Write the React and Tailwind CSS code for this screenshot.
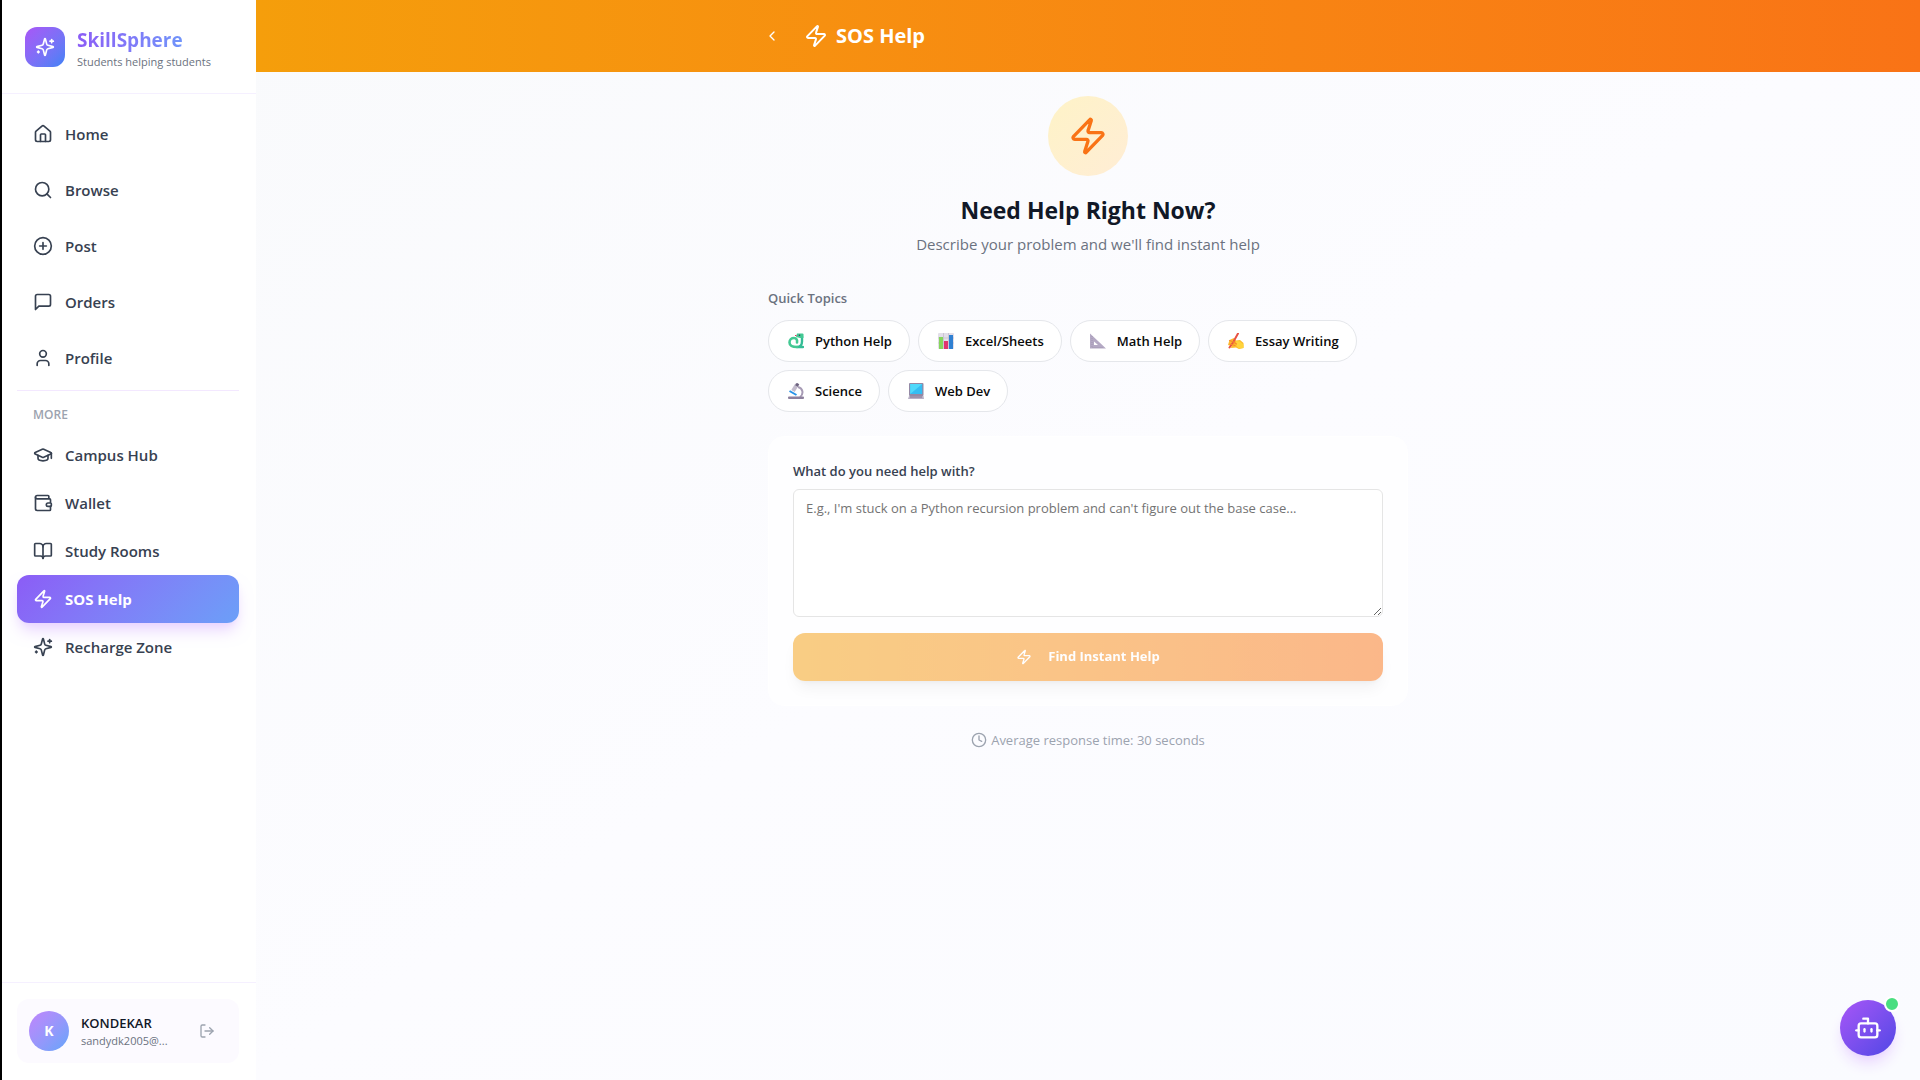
import React from "react";
import {
  House, Search, CirclePlus, User, GraduationCap, Wallet, BookOpen, Zap,
  LogOut, ChevronLeft, Clock, Bot,
} from "lucide-react";

function LineIcon({ className, children }) {
  return (
    <svg className={className} viewBox="0 0 24 24" fill="none" stroke="currentColor" strokeWidth="2" strokeLinecap="round" strokeLinejoin="round" aria-hidden="true">
      {children}
    </svg>
  );
}

function MessageIcon({ className }) {
  return (
    <LineIcon className={className}>
      <path d="M21 15a2 2 0 0 1-2 2H7l-4 4V5a2 2 0 0 1 2-2h14a2 2 0 0 1 2 2z" />
    </LineIcon>
  );
}

function SparklesIcon({ className }) {
  return (
    <LineIcon className={className}>
      <path d="M9.937 15.5A2 2 0 0 0 8.5 14.063l-6.135-1.582a.5.5 0 0 1 0-.962L8.5 9.936A2 2 0 0 0 9.937 8.5l1.582-6.135a.5.5 0 0 1 .963 0L14.063 8.500A2 2 0 0 0 15.500 9.937l6.135 1.581a.5.5 0 0 1 0 .964L15.500 14.063a2 2 0 0 0-1.437 1.437l-1.582 6.135a.5.5 0 0 1-.963 0z" />
      <path d="M20 3v4" />
      <path d="M22 5h-4" />
      <path d="M4 17v2" />
      <path d="M5 18H3" />
    </LineIcon>
  );
}

const mainNav = [
  { label: "Home", Icon: House },
  { label: "Browse", Icon: Search },
  { label: "Post", Icon: CirclePlus },
  { label: "Orders", Icon: MessageIcon },
  { label: "Profile", Icon: User },
];

const moreNav = [
  { label: "Campus Hub", Icon: GraduationCap },
  { label: "Wallet", Icon: Wallet },
  { label: "Study Rooms", Icon: BookOpen },
  { label: "SOS Help", Icon: Zap, active: true },
  { label: "Recharge Zone", Icon: SparklesIcon },
];

function NavLink({ label, Icon, active }) {
  return (
    <a
      href="#"
      aria-current={active ? "page" : undefined}
      className={
        active
          ? "flex h-12 items-center gap-3 rounded-xl bg-linear-135 from-[#8b5cf6] to-[#6b9ff8] px-4 text-[15px] font-bold text-white shadow-lg shadow-purple-200"
          : "flex h-12 items-center gap-3 rounded-xl px-4 text-[15px] font-semibold text-[#374151]"
      }
    >
      <Icon className="size-5" />
      <span>{label}</span>
    </a>
  );
}

function Snake() {
  return (
    <svg viewBox="0 0 16 16" className="size-4" aria-hidden="true">
      <path d="M14 3v5.500c0 3.500-2 5.500-5 5.500h6" fill="none" stroke="#35bd96" strokeWidth="2.400" strokeLinecap="round" strokeLinejoin="round" />
      <path d="M9 14C4 14 1.500 12.500 1.500 9.500S3.500 5 6 5s3.500 2 3 4.500" fill="none" stroke="#43c993" strokeWidth="2.600" strokeLinecap="round" />
      <path d="M9 0.500h5.500q1 0 1 1V5H12L8 4z" fill="#43c993" />
      <circle cx="11.500" cy="2.200" r="0.800" fill="#433b6b" />
      <path d="M8.500 2.500H7" stroke="#e0335f" />
    </svg>
  );
}

function Bars() {
  return (
    <svg viewBox="0 0 16 16" className="size-4" aria-hidden="true">
      <rect width="16" height="16" rx="1" fill="#e3dfe9" />
      <path d="M5.500 0v16M10.500 0v16M0 5h16M0 10h16" stroke="#c2bccb" strokeWidth="0.700" />
      <rect x="1" y="4" width="4" height="12" fill="#86d55c" />
      <rect x="6" y="8" width="4" height="8" fill="#e0336e" />
      <rect x="11" y="2" width="4" height="14" fill="#2f80d2" />
    </svg>
  );
}

function Ruler() {
  return (
    <svg viewBox="0 0 16 16" className="size-4" aria-hidden="true">
      <path d="M0 0.500L16 15.500H0zM4 8.500V12h4z" fill="#b4a9c4" fillRule="evenodd" />
      <path d="M2 3v11.500h11" fill="none" stroke="#9e93af" strokeWidth="0.800" strokeDasharray="1 1" />
    </svg>
  );
}

function Writing() {
  return (
    <svg viewBox="0 0 16 16" className="size-4" aria-hidden="true">
      <path d="M1.500 7L6 5l2 2.500 4-.5 3.500 3v5L11 16l-3-1.500-5 .5.500-2L0 12z" fill="#fdbb2b" />
      <path d="M8 8l4 .500 3.500 3V15L11 15.500 8.500 13z" fill="#ffd43b" />
      <path d="M10 0.500L5 9.500 1.500 14.500" fill="none" stroke="#e85244" strokeWidth="2" strokeLinecap="round" />
      <path d="M1.500 7.500l4 1.500 3 2M2 11l5 1.500" fill="none" stroke="#f58a2d" strokeWidth="1.200" strokeLinecap="round" />
    </svg>
  );
}

function Microscope() {
  return (
    <svg viewBox="0 0 16 16" className="size-4" aria-hidden="true">
      <path d="M10 4c5 1 6 7 2 10" fill="none" stroke="#a79bb5" strokeWidth="2" />
      <path d="M9 1.500L5 8" stroke="#c3bccd" strokeWidth="4" />
      <path d="M10 0.500L8.500 3" stroke="#6e6480" strokeWidth="3" />
      <path d="M1.500 8l7 4" stroke="#2793e8" strokeWidth="2" />
      <rect x="0" y="13.500" width="16" height="2.500" rx="1" fill="#8d809d" />
    </svg>
  );
}

function Laptop() {
  return (
    <svg viewBox="0 0 16 16" className="size-4" aria-hidden="true">
      <rect x="1" width="14.500" height="13" rx="1" fill="#9489a5" />
      <rect x="2.200" y="1" width="12" height="10" fill="#35bdf2" />
      <path d="M2.200 11V1h12z" fill="#4fd9fb" />
      <path d="M1 13h14.500l.5 3H0z" fill="#b9b0c6" />
      <path d="M2 14h12" stroke="#81758f" />
    </svg>
  );
}

const topics = [
  { label: "Python Help", Icon: Snake },
  { label: "Excel/Sheets", Icon: Bars },
  { label: "Math Help", Icon: Ruler },
  { label: "Essay Writing", Icon: Writing },
  { label: "Science", Icon: Microscope },
  { label: "Web Dev", Icon: Laptop },
];

function Sidebar() {
  return (
    <aside className="flex w-64 shrink-0 flex-col border-l-2 border-black bg-white">
      <div className="flex h-[94px] items-center gap-3 border-b border-[#f5f0ff] px-[23px]">
        <div className="flex size-10 items-center justify-center rounded-xl bg-linear-to-br from-[#a855f7] to-[#3b82f6] text-white">
          <SparklesIcon className="size-5" />
        </div>
        <div className="pt-0.5">
          <h1 className="w-fit bg-linear-to-r from-[#8b5cf6] to-[#6f94fa] bg-clip-text text-[19px] leading-7 font-bold text-transparent">SkillSphere</h1>
          <p className="text-[11px] leading-4 text-[#6b7280]">Students helping students</p>
        </div>
      </div>
      <nav className="flex-1 pt-4 pr-[17px] pl-[15px]">
        <div className="flex flex-col gap-2 border-b border-[#f3e8ff] pb-2">
          {mainNav.map((item) => <NavLink key={item.label} {...item} />)}
        </div>
        <p className="px-4 pt-4 pb-2 text-[12px] leading-4 font-semibold text-[#9ca3af]">MORE</p>
        {moreNav.map((item) => <NavLink key={item.label} {...item} />)}
      </nav>
      <div className="border-t border-[#f5f0ff] pt-4 pr-[17px] pb-[17px] pl-[15px]">
        <div className="flex items-center gap-3 rounded-xl bg-[#fcfaff] p-3">
          <div className="flex size-10 shrink-0 items-center justify-center rounded-full bg-linear-to-br from-[#c084fc] to-[#60a5fa] text-sm font-bold text-white">K</div>
          <div className="min-w-0 flex-1">
            <p className="text-[13px] leading-5 font-semibold text-[#111827]">KONDEKAR</p>
            <p className="truncate text-[11px] leading-4 text-[#6b7280]">sandydk2005@...</p>
          </div>
          <button type="button" aria-label="Log out" className="flex size-10 shrink-0 items-center justify-center text-[#9ca3af]">
            <LogOut className="size-4" />
          </button>
        </div>
      </div>
    </aside>
  );
}

export default function App() {
  return (
    <div className="flex min-h-screen bg-white font-['Open_Sans',sans-serif]">
      <Sidebar />
      <div className="min-w-0 flex-1 bg-linear-to-br from-[#f9fafc] via-[#fcfcff] to-[#fafbff]">
        <header className="bg-linear-to-r from-[#f59e0b] to-[#f97316] text-white">
          <div className="mx-auto flex h-[72px] max-w-2xl items-center gap-3">
            <button type="button" aria-label="Back" className="flex size-10 items-center justify-center">
              <ChevronLeft className="size-4" />
            </button>
            <h1 className="flex items-center gap-2 text-[20px] leading-7 font-bold">
              <Zap className="size-6" />
              SOS Help
            </h1>
          </div>
        </header>
        <main className="mx-auto max-w-2xl px-4 py-6">
          <section className="flex flex-col items-center text-center">
            <div className="flex size-20 items-center justify-center rounded-full bg-linear-to-br from-[#fef3c7] to-[#ffedd5] text-[#f97316]">
              <Zap className="size-10" />
            </div>
            <h2 className="mt-4 text-[23px] leading-9 font-bold text-[#111827]">Need Help Right Now?</h2>
            <p className="mt-1 text-[15px] leading-6 text-[#6b7280]">Describe your problem and we'll find instant help</p>
          </section>
          <section className="mt-8">
            <h3 className="text-[13px] leading-5 font-semibold text-[#6b7280]">Quick Topics</h3>
            <div className="mt-3 flex flex-wrap gap-2">
              {topics.map(({ label, Icon }) => (
                <button key={label} type="button" className="flex h-[42px] items-center gap-[11px] rounded-full border border-[#e5e7eb] bg-white pr-[17px] pl-[19px] text-[13px] leading-5 font-semibold text-[#0a0a0a]">
                  <Icon />
                  {label}
                </button>
              ))}
            </div>
          </section>
          <form className="mt-6 rounded-2xl border border-white bg-white/80 p-6">
            <label htmlFor="problem" className="block text-[13px] leading-5 font-semibold text-[#374151]">What do you need help with?</label>
            <textarea id="problem" placeholder="E.g., I'm stuck on a Python recursion problem and can't figure out the base case..." className="mt-2 block h-32 w-full rounded-md border border-[#e5e5e5] bg-white px-3 py-2 text-[13px] leading-5 placeholder:text-[#737373]" />
            <button type="button" className="mt-4 flex h-12 w-full items-center justify-center gap-4 rounded-xl bg-linear-to-r from-[#f59e0b] to-[#f97316] text-[13px] font-bold text-white opacity-50 shadow-lg">
              <Zap className="size-4" />
              Find Instant Help
            </button>
          </form>
          <p className="mt-6 flex items-center justify-center gap-1 text-[13px] leading-5 text-[#9ca3af]">
            <Clock className="size-4" />
            Average response time: 30 seconds
          </p>
        </main>
      </div>
      <button type="button" aria-label="Open assistant" className="fixed right-6 bottom-6 flex size-14 items-center justify-center rounded-full bg-linear-to-br from-[#a855f7] to-[#4f46e5] text-white shadow-lg shadow-purple-200">
        <Bot className="size-7" />
        <span className="absolute -top-1 -right-1 size-4 rounded-full border-2 border-white bg-[#4ade80]" />
      </button>
    </div>
  );
}
